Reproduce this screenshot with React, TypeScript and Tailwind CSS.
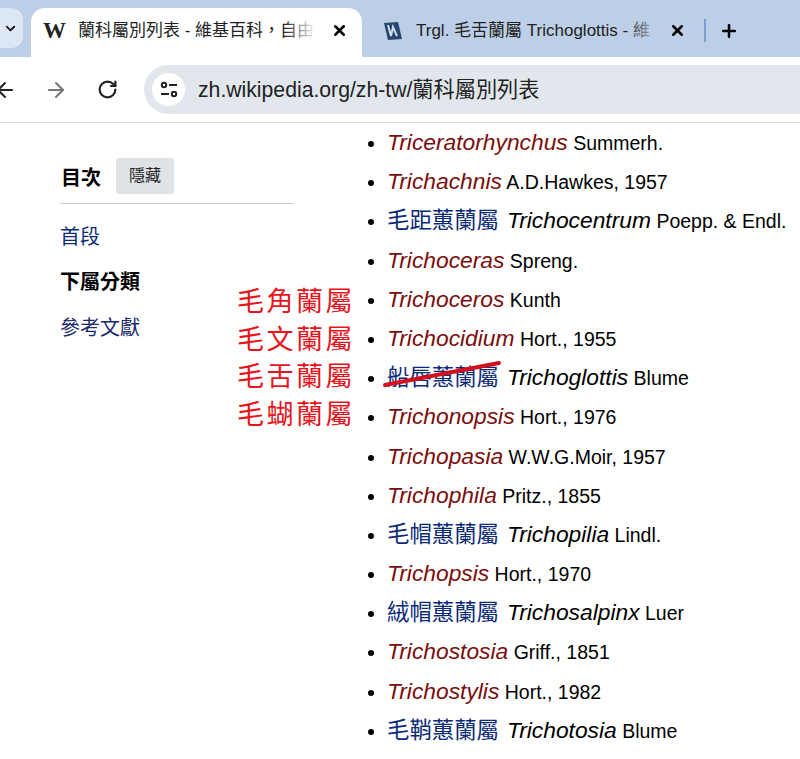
import { ArrowLeft, ArrowRight, ChevronDown, Plus, RotateCw, X } from "lucide-react";

const cjk = "font-['Liberation_Sans','Noto_Sans_CJK_TC',sans-serif]";

type Genus = { zh?: string; name: string; author: string };

const GENERA: Genus[] = [
  { name: "Triceratorhynchus", author: "Summerh." },
  { name: "Trichachnis", author: "A.D.Hawkes, 1957" },
  { zh: "毛距蕙蘭屬", name: "Trichocentrum", author: "Poepp. & Endl." },
  { name: "Trichoceras", author: "Spreng." },
  { name: "Trichoceros", author: "Kunth" },
  { name: "Trichocidium", author: "Hort., 1955" },
  { zh: "船唇蕙蘭屬", name: "Trichoglottis", author: "Blume" },
  { name: "Trichonopsis", author: "Hort., 1976" },
  { name: "Trichopasia", author: "W.W.G.Moir, 1957" },
  { name: "Trichophila", author: "Pritz., 1855" },
  { zh: "毛帽蕙蘭屬", name: "Trichopilia", author: "Lindl." },
  { name: "Trichopsis", author: "Hort., 1970" },
  { zh: "絨帽蕙蘭屬", name: "Trichosalpinx", author: "Luer" },
  { name: "Trichostosia", author: "Griff., 1851" },
  { name: "Trichostylis", author: "Hort., 1982" },
  { zh: "毛鞘蕙蘭屬", name: "Trichotosia", author: "Blume" },
];

const NOTES = ["毛角蘭屬", "毛文蘭屬", "毛舌蘭屬", "毛蝴蘭屬"];

function TabBar() {
  return (
    <div className="flex h-[57px] items-end bg-[#bccfe6]">
      <div className="mb-[9px] flex h-10 w-[23px] items-center justify-end rounded-r-xl bg-[#dce7f3] pr-[5px]">
        <ChevronDown size={15} strokeWidth={3} className="text-[#111]" />
      </div>
      <div className="ml-2 flex h-[49px] w-[331px] items-center rounded-t-[14px] bg-white pb-1 pl-[12px]">
        <span className="w-[35px] font-['Liberation_Serif',serif] text-[23px] font-bold leading-none text-[#222]">W</span>
        <div className="relative w-[238px] whitespace-nowrap text-[17px] text-[#222]">
          蘭科屬別列表 - 維基百科，自由
          <div className="absolute inset-y-0 right-0 w-8 bg-gradient-to-r from-transparent to-white" />
        </div>
        <X size={17} strokeWidth={3.5} className="ml-[15px] text-black" />
      </div>
      <div className="flex h-[49px] flex-1 items-center pb-1 pl-[21px]">
        <svg width="20" height="20" viewBox="0 0 20 20" className="shrink-0">
          <path d="M1 2 L15 1 L19 18 L5 19 Z" fill="#27466e" />
          <path d="M5 4 L8 15 L10 6 L14 15" fill="none" stroke="#cfdcea" strokeWidth="2" />
        </svg>
        <div className="relative ml-[13px] w-[243px] whitespace-nowrap text-[17px] text-[#222]">
          Trgl. 毛舌蘭屬 Trichoglottis - 維
          <div className="absolute inset-y-0 right-0 w-8 bg-gradient-to-r from-transparent to-[#bccfe6]" />
        </div>
        <X size={17} strokeWidth={3.5} className="ml-[10px] text-black" />
        <div className="ml-[18px] h-[23px] w-[2px] bg-[#7f9fcb]" />
        <Plus size={20} strokeWidth={3} className="ml-[13px] text-black" />
      </div>
    </div>
  );
}

function Toolbar() {
  return (
    <div className="flex h-[66px] items-center border-b border-[#d9d9d9] bg-white">
      <ArrowLeft size={24} strokeWidth={2} className="ml-[-7px] text-[#222]" />
      <ArrowRight size={24} strokeWidth={2} className="ml-[27px] text-[#777]" />
      <RotateCw size={21} strokeWidth={2.5} className="ml-[29px] text-[#222]" />
      <div className="ml-[26px] flex h-[49px] flex-1 items-center rounded-l-full bg-[#e1e7ed] pl-[8px]">
        <div className="flex h-[33px] w-[33px] items-center justify-center rounded-full bg-white">
          <svg width="20" height="20" viewBox="0 0 20 20" fill="none" stroke="#222" strokeWidth="2">
            <circle cx="5" cy="5" r="2.2" />
            <path d="M10 5 H18" />
            <path d="M2 14 H10" />
            <circle cx="15" cy="14" r="2.2" />
          </svg>
        </div>
        <span className="ml-[13px] text-[21.2px] text-[#222]">zh.wikipedia.org/zh-tw/蘭科屬別列表</span>
      </div>
    </div>
  );
}

function Sidebar() {
  return (
    <aside className="ml-[60px] w-[233px] shrink-0 pt-[35px]">
      <div className="flex items-center gap-[15px] border-b border-[#c8ccd1] pb-[9px]">
        <span className="ml-px mt-1 text-[20px] font-bold text-black">目次</span>
        <span className="flex h-9 w-[58px] items-center justify-center rounded-[3px] bg-[#dfe3e6] text-[16px] text-[#202122]">隱藏</span>
      </div>
      <div className="mt-[19px] text-[20px] leading-[28px] text-[#0b2a78]">首段</div>
      <div className="mt-[17px] text-[20px] font-bold leading-[28px] text-black">下屬分類</div>
      <div className="mt-[18px] text-[20px] leading-[28px] text-[#1b2a6b]">參考文獻</div>
    </aside>
  );
}

export default function App() {
  return (
    <div className={`relative h-[759px] w-[800px] overflow-hidden bg-white ${cjk}`}>
      <TabBar />
      <Toolbar />
      <div className="flex">
        <Sidebar />
        <ul className="ml-[94px] list-disc whitespace-nowrap text-[19.5px] text-black">
          {GENERA.map((g) => (
            <li key={g.name} className="h-[39.2px] leading-[38.6px]">
              {g.zh && <span className="mr-2 text-[22.4px] text-[#0b2a78]">{g.zh}</span>}
              <span className={`text-[22.8px] italic ${g.zh ? "text-black" : "text-[#7a0d0d]"}`}>{g.name}</span>{" "}
              <span>{g.author}</span>
            </li>
          ))}
        </ul>
      </div>

      {/* handwritten notes and the strike drawn over the list */}
      <div className="absolute left-[237px] top-[284px] text-[27px] leading-[37.7px] tracking-[2.5px] text-[#e8141c]">
        {NOTES.map((n) => (
          <div key={n}>{n}</div>
        ))}
      </div>
      <svg className="absolute left-[380px] top-[358px]" width="124" height="32" viewBox="0 0 124 32">
        <path d="M5 27 L119 5" stroke="#d3101a" strokeWidth="4" strokeLinecap="round" />
      </svg>
    </div>
  );
}
